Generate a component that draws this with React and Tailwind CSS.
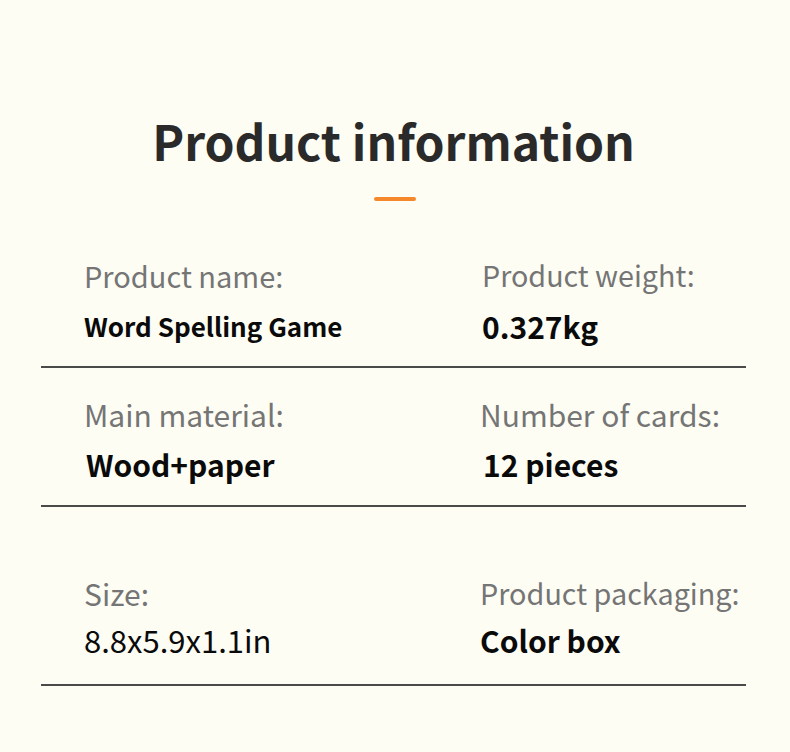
export default function App() {
  const font = { fontFamily: '"Noto Sans CJK SC", "Noto Sans", sans-serif' };
  return (
    <div className="w-[790px] h-[752px] bg-[#fdfdf4] flex flex-col items-center" style={font}>
      <h1 className="mt-[108px] text-[48px] leading-[64px] font-bold text-[#2a2a2a] pr-[3px]">Product information</h1>
      <div className="mt-[25px] w-[42px] h-[4px] rounded-full bg-[#f5882a]" />
      <div className="mt-[56px] w-[705px] self-start ml-[41px]">
        <div className="grid grid-cols-[441px_1fr] border-b-2 border-[#4a4a4a] pb-[24px]">
          <div className="pl-[43px] flex flex-col">
            <span className="text-[29px] leading-[36px] text-[#757575]">Product name:</span>
            <span className="mt-[17px] text-[26px] leading-[32px] font-bold text-[#0a0a0a]">Word Spelling Game</span>
          </div>
          <div className="flex flex-col">
            <span className="text-[28.7px] leading-[36px] text-[#757575]">Product weight:</span>
            <span className="mt-[17px] text-[30px] leading-[32px] font-bold text-[#0a0a0a]">0.327kg</span>
          </div>
        </div>
        <div className="grid grid-cols-[439px_1fr] border-b-2 border-[#4a4a4a] pt-[28px] pb-[25px]">
          <div className="pl-[43px] flex flex-col">
            <span className="text-[30px] leading-[36px] text-[#757575]">Main material:</span>
            <span className="mt-[16px] text-[30px] leading-[32px] font-bold text-[#0a0a0a] pl-[2px]">Wood+paper</span>
          </div>
          <div className="flex flex-col">
            <span className="text-[30px] leading-[36px] text-[#757575]">Number of cards:</span>
            <span className="mt-[16px] text-[30px] leading-[32px] font-bold text-[#0a0a0a] pl-[3px]">12 pieces</span>
          </div>
        </div>
        <div className="grid grid-cols-[439px_1fr] border-b-2 border-[#4a4a4a] pt-[68px] pb-[28px]">
          <div className="pl-[43px] flex flex-col">
            <span className="text-[30px] leading-[36px] text-[#757575]">Size:</span>
            <span className="mt-[13px] text-[31px] leading-[32px] text-[#0a0a0a]">8.8x5.9x1.1in</span>
          </div>
          <div className="flex flex-col">
            <span className="text-[28.8px] leading-[36px] text-[#757575]">Product packaging:</span>
            <span className="mt-[13px] text-[30px] leading-[32px] font-bold text-[#0a0a0a]">Color box</span>
          </div>
        </div>
      </div>
    </div>
  );
}
